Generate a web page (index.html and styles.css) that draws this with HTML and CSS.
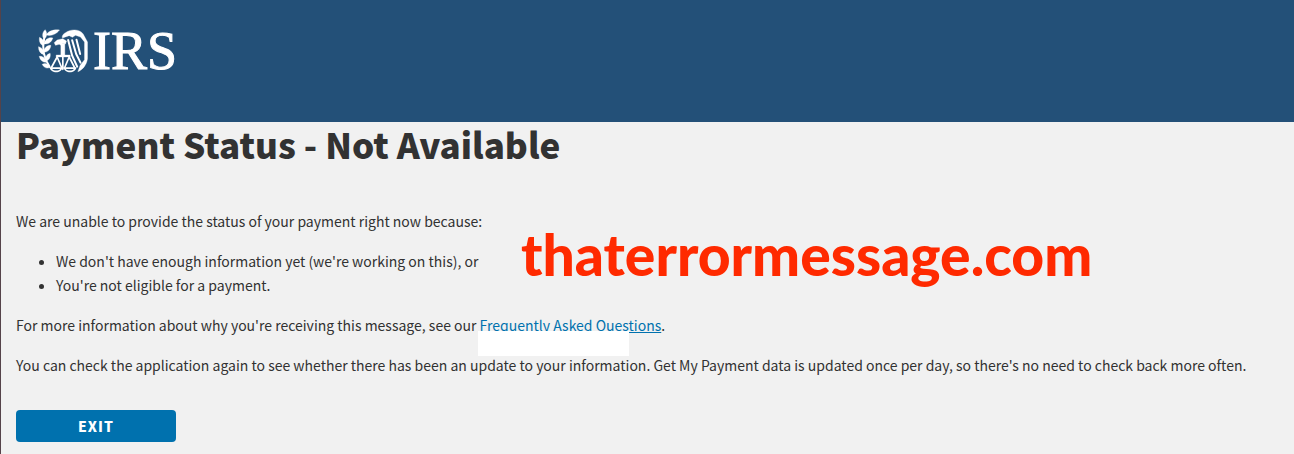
FILE: index.html
```html
<!DOCTYPE html>
<html lang="en">
<head>
<meta charset="utf-8">
<meta name="viewport" content="width=device-width, initial-scale=1">
<title>Payment Status - Not Available</title>
<link rel="stylesheet" href="styles.css">
</head>
<body>
<header class="site-header">
  <div class="logo">
    <svg class="emblem" viewBox="12 6 152 138" aria-hidden="true">
      <g fill="#fff" stroke="#fff" stroke-width="1" stroke-linejoin="round">
        <path d="M76 12C58 10 42 15 36 27C50 31 65 26 76 12Z"/>
        <path d="M33 11C24 19 23 31 30 40C39 32 40 21 33 11Z"/>
        <path d="M16 34C14 46 18 56 28 60C32 49 27 39 16 34Z"/>
        <path d="M56 36C43 33 33 40 29 53C42 56 52 49 56 36Z"/>
        <path d="M13 62C13 75 18 83 29 86C31 75 25 65 13 62Z"/>
        <path d="M50 58C37 58 30 66 28 79C41 79 49 70 50 58Z"/>
        <path d="M15 91C18 103 25 109 36 109C35 98 27 90 15 91Z"/>
        <path d="M48 82C37 85 32 94 34 106C45 103 50 94 48 82Z"/>
        <path d="M24 115C30 126 39 129 48 124C43 114 34 110 24 115Z"/>
        <path d="M94 20C110 8 137 9 147 24L160 48V98C157 117 146 131 131 137L138 118L151 101V48L139 33L124 28L115 34L105 29L85 36C82 30 87 24 94 20Z"/>
        <path d="M60 50L69 42L86 38L97 45L94 54L86 52L81 58L75 55L64 58Z"/>
        <path d="M80 52H92V88H80Z"/>
        <path d="M66 87H108V93H66Z"/>
      </g>
      <g fill="none" stroke="#fff" stroke-linecap="round" stroke-linejoin="round">
        <path stroke-width="6" d="M30 38C24 64 29 96 46 122"/>
        <path stroke-width="6" d="M102 42L114 89L129 122M114 43L126 84L139 110M127 41L138 84"/>
        <path stroke-width="5" d="M86 91V130M69 93L51 126M69 93L83 126M105 93L91 126M105 93L122 126"/>
      </g>
      <g fill="#fff">
        <path d="M46 124H85C83 144 50 144 46 124ZM88 124H127C124 144 91 144 88 124Z"/>
      </g>
      <path d="M54 129H78C74 135 58 135 54 129ZM95 129H119C115 135 99 135 95 129Z" fill="#235078"/>
    </svg>
    <span class="wordmark">IRS</span>
  </div>
</header>
<main class="content">
  <h1 class="title">Payment Status - Not Available</h1>
  <p class="text">We are unable to provide the status of your payment right now because:</p>
  <ul class="reasons">
    <li>We don't have enough information yet (we're working on this), or</li>
    <li>You're not eligible for a payment.</li>
  </ul>
  <p class="text">For more information about why you're receiving this message, see our <span class="covered"><a class="link" href="#">Frequently Asked Questions</a></span>.</p>
  <p class="text">You can check the application again to see whether there has been an update to your information. Get My Payment data is updated once per day, so there's no need to check back more often.</p>
  <button class="exit" type="button">EXIT</button>
  <div class="watermark">thaterrormessage.com</div>
</main>
</body>
</html>
```
FILE: styles.css
```css
* {
  box-sizing: border-box;
}

body {
  margin: 0;
  min-height: 100vh;
  border-left: 1px solid #55434a;
  background: #f1f1f1;
  color: #323232;
  font: 14px/24px "Noto Sans CJK SC", "Noto Sans", sans-serif;
}

.site-header {
  height: 122px;
  padding: 28px 37px;
  background: #235078;
}

.logo {
  display: flex;
  align-items: center;
  gap: 4px;
  height: 46px;
}

.emblem {
  width: 51px;
  height: 46px;
}

.wordmark {
  color: #fff;
  font: 54px/46px "Liberation Serif", serif;
  -webkit-text-stroke: 1px #fff;
}

.content {
  position: relative;
  padding: 0 15px 12px;
}

.title {
  margin: 0 0 43px;
  font-size: 35px;
  line-height: 44px;
  font-weight: 900;
}

.text,
.reasons {
  margin: 0 0 16px;
}

.reasons {
  padding-left: 40px;
}

.covered {
  position: relative;
}

.covered::after {
  content: "";
  position: absolute;
  top: 16px;
  left: -2px;
  width: 151px;
  height: 25px;
  background: #fff;
}

.link {
  color: #0071ae;
  text-decoration: underline;
}

.exit {
  display: block;
  width: 160px;
  height: 32px;
  margin-top: 33px;
  padding: 0;
  border: 0;
  border-radius: 4px;
  background: #0071ae;
  color: #fff;
  font: 900 14px/32px "Noto Sans CJK SC", "Noto Sans", sans-serif;
  letter-spacing: 1px;
}

.watermark {
  position: absolute;
  top: 96px;
  left: 520px;
  color: #ff2a00;
  font: 900 57px/72px Lato, sans-serif;
}
```
